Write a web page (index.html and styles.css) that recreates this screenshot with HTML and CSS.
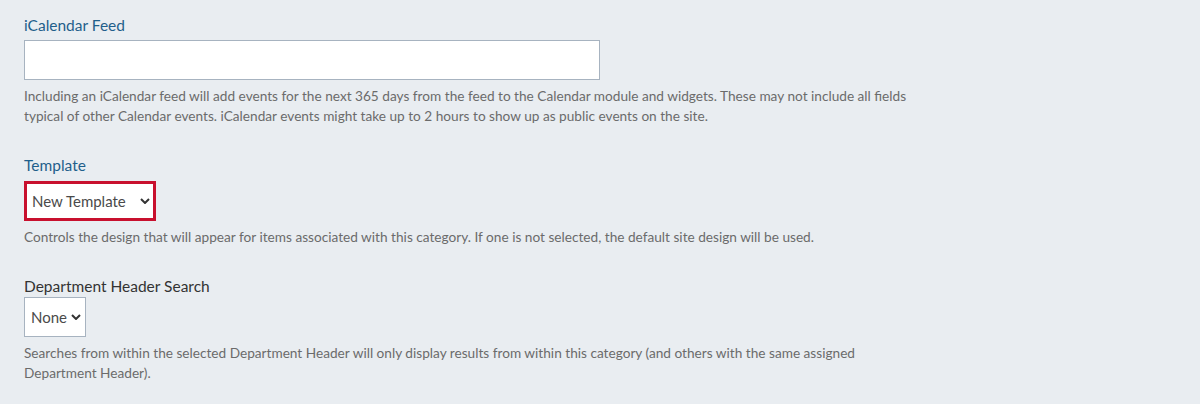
FILE: index.html
```html
<!DOCTYPE html>
<html lang="en">
<head>
<meta charset="utf-8">
<title>Category settings</title>
<link rel="stylesheet" href="styles.css">
</head>
<body>
<form class="form">
  <div class="field">
    <label class="label label-blue" for="ical">iCalendar Feed</label>
    <input class="text-input" id="ical" type="text">
    <p class="help">Including an iCalendar feed will add events for the next 365 days from the feed to the Calendar module and widgets. These may not include all fields typical of other Calendar events. iCalendar events might take up to 2 hours to show up as public events on the site.</p>
  </div>
  <div class="field">
    <label class="label label-blue" for="tpl">Template</label>
    <div class="select select-highlight">
      <span class="select-value">New Template</span>
      <svg class="chev" viewBox="0 0 10 6" width="10" height="6"><path d="M1 1 L5 5 L9 1" fill="none" stroke="#333" stroke-width="2"/></svg>
    </div>
    <p class="help">Controls the design that will appear for items associated with this category. If one is not selected, the default site design will be used.</p>
  </div>
  <div class="field">
    <label class="label label-dark" for="dept">Department Header Search</label>
    <div class="select select-plain">
      <span class="select-value">None</span>
      <svg class="chev" viewBox="0 0 10 6" width="10" height="6"><path d="M1 1 L5 5 L9 1" fill="none" stroke="#333" stroke-width="2"/></svg>
    </div>
    <p class="help">Searches from within the selected Department Header will only display results from within this category (and others with the same assigned Department Header).</p>
  </div>
</form>
</body>
</html>
```
FILE: styles.css
```css
html, body {
  margin: 0;
  padding: 0;
  background: #e9edf1;
}
body {
  font-family: Lato, "Open Sans", sans-serif;
  color: #333;
}
.form {
  padding: 14px 24px 0 24px;
  display: flex;
  flex-direction: column;
  gap: 28px;
}
.field {
  display: flex;
  flex-direction: column;
  align-items: flex-start;
}
.label {
  font-size: 15.5px;
  line-height: 22px;
  display: block;
}
.label-blue { color: #1f5f8b; }
.label-dark { color: #333; }
.text-input {
  margin: 4px 0 0 0;
  width: 576px;
  height: 40px;
  box-sizing: border-box;
  border: 1px solid #a7b3c0;
  background: #fff;
  padding: 0 10px;
  font: inherit;
  outline: none;
}
.help {
  margin: 6px 0 0 0;
  font-size: 13.65px;
  line-height: 20px;
  color: #6b6b6b;
  max-width: 890px;
}
.select {
  height: 40px;
  box-sizing: border-box;
  background: #fff;
  display: flex;
  align-items: center;
  font-size: 15px;
  color: #4a4a4a;
}
.select-highlight {
  margin-top: 5px;
  border: 3px solid #c8102e;
  width: 132px;
  padding: 0 0 0 5px;
  gap: 14px;
}
.select-plain {
  margin-top: 0;
  border: 1px solid #a7b3c0;
  width: 62px;
  padding: 0 0 0 6px;
  gap: 4px;
}
.chev { flex: none; }
```
